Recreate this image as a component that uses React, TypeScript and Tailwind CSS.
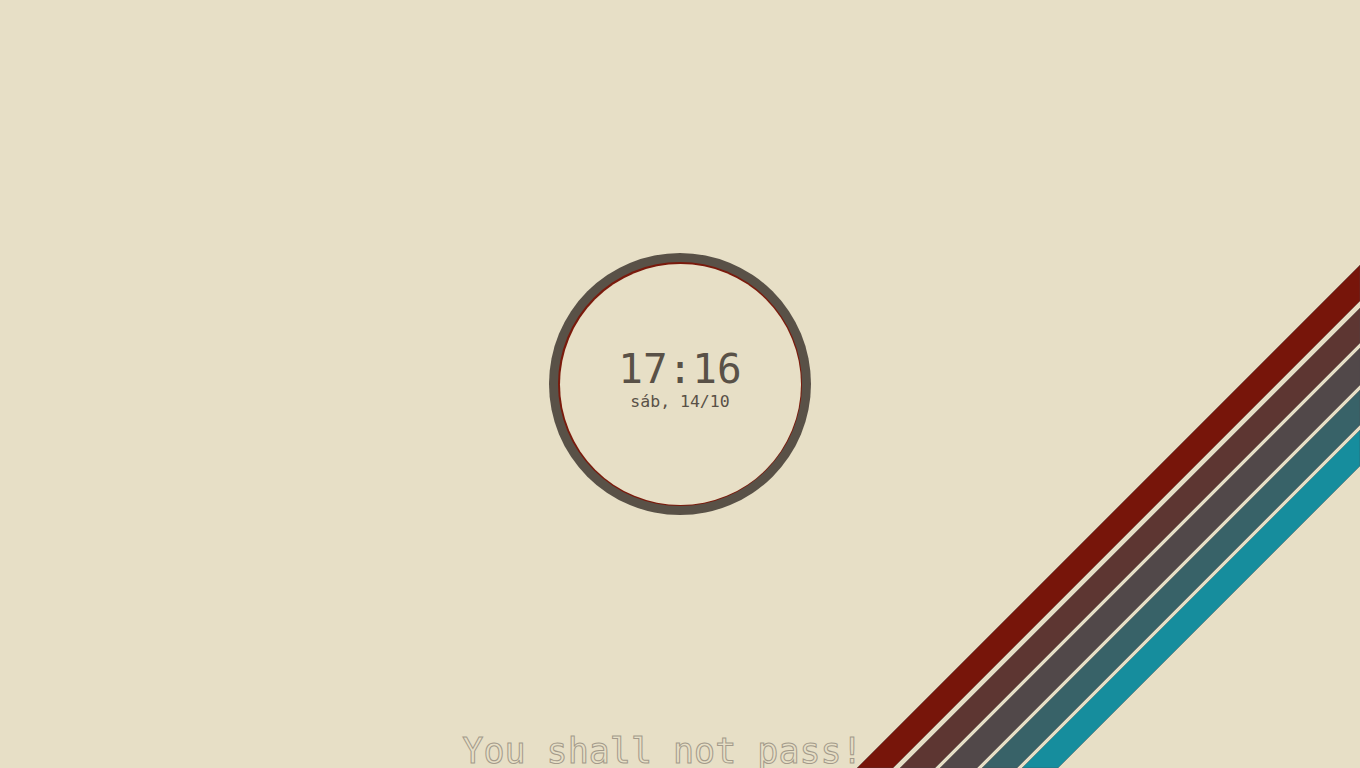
import React from "react";

const stripes: { a: number; b: number; c: string }[] = [
  { a: 1625, b: 1661, c: "#77150a" },
  { a: 1668, b: 1703, c: "#5d3632" },
  { a: 1708, b: 1745, c: "#514849" },
  { a: 1750, b: 1785, c: "#386268" },
  { a: 1790, b: 1826, c: "#168d9d" },
];

function Stripes() {
  return (
    <svg
      className="pointer-events-none absolute inset-0"
      width={1360}
      height={768}
      viewBox="0 0 1360 768"
    >
      {stripes.map((s, i) => (
        <polygon
          key={i}
          points={`${s.a - 768},768 1360,${s.a - 1360} 1360,${s.b - 1360} ${s.b - 768},768`}
          fill={s.c}
          stroke="#4b4a4e"
          strokeWidth={0.4}
        />
      ))}
    </svg>
  );
}

export default function App() {
  return (
    <div className="relative grid h-[768px] w-[1360px] overflow-hidden bg-[#e7dfc6] font-['DejaVu_Sans_Mono',monospace]">
      <div className="col-start-1 row-start-1 flex items-center justify-center">
        <div className="flex h-[262px] w-[262px] items-center justify-center rounded-full bg-[#595147]">
          <div className="flex h-[244px] w-[244px] items-center justify-center rounded-full bg-[#7a1a0c]">
            <div className="flex h-[241px] w-[241px] flex-col items-center justify-center rounded-full bg-[#e7dfc6] pb-[10px]">
              <div className="text-[41px] leading-[44px] text-[#595147]">17:16</div>
              <div className="mt-[1px] text-[16.5px] leading-[20px] text-[#595147]">sáb, 14/10</div>
            </div>
          </div>
        </div>
      </div>
      <div className="col-start-1 row-start-1 flex items-end justify-center pr-[35px]">
        <div className="mb-[-4px] text-[35px] leading-[42px] text-transparent [-webkit-text-stroke:1px_#a39a8a]">
          You shall not pass!
        </div>
      </div>
      <Stripes />
    </div>
  );
}
